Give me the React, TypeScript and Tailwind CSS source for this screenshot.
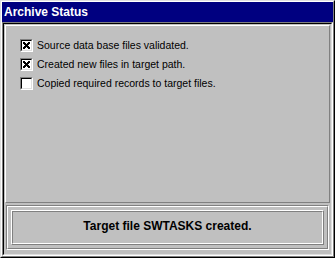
import React from "react";

function Check({ checked, label }: { checked: boolean; label: string }) {
  return (
    <div className="flex items-center h-[19px]">
      <div className="w-[13px] h-[13px] bg-white border border-t-[#808080] border-l-[#808080] border-r-white border-b-white">
        <div className="w-full h-full border border-t-black border-l-black border-r-[#dfdfdf] border-b-[#dfdfdf] flex items-center justify-center">
          {checked && (
            <svg width="9" height="9" viewBox="0 0 9 9" shapeRendering="crispEdges">
              <path d="M1 1h2v1h1v1h1v-1h1v-1h2v2h-1v1h-1v1h1v1h1v2h-2v-1h-1v-1h-1v1h-1v1h-2v-2h1v-1h1v-1h-1v-1h-1z" fill="#000" />
            </svg>
          )}
        </div>
      </div>
      <span className="ml-[4px] text-[10.5px] text-black leading-none">{label}</span>
    </div>
  );
}

export default function App() {
  return (
    <div
      className="w-[335px] h-[258px] bg-[#c0c0c0] border border-t-[#dfdfdf] border-l-[#dfdfdf] border-r-black border-b-black"
      style={{ fontFamily: '"Liberation Sans", Arial, sans-serif' }}
    >
      <div className="w-full h-full border border-t-white border-l-white border-r-[#808080] border-b-[#808080] flex flex-col">
        <div className="h-[20px] bg-[#000080] text-white font-bold text-[12px] pl-[2px] flex items-center">
          Archive Status
        </div>
        <div className="flex-1 border border-t-[#808080] border-l-[#808080] border-r-white border-b-white">
          <div className="w-full h-full border border-t-black border-l-black border-r-[#dfdfdf] border-b-[#dfdfdf] flex flex-col p-[1px]">
            <div className="flex-1 border border-t-white border-l-white border-r-[#808080] border-b-[#808080] pl-[14px] pt-[10px] flex flex-col">
              <Check checked label="Source data base files validated." />
              <Check checked label="Created new files in target path." />
              <Check checked={false} label="Copied required records to target files." />
            </div>
            <div className="h-[45px] mx-[1px] mt-[2px] mb-[3px] border border-t-[#808080] border-l-[#808080] border-r-white border-b-white">
              <div className="w-full h-full border border-t-white border-l-white border-r-[#808080] border-b-[#808080] p-[3px]">
                <div className="w-full h-full border border-t-white border-l-white border-r-[#808080] border-b-[#808080]">
                  <div className="w-full h-full border border-t-[#808080] border-l-[#808080] border-r-white border-b-white flex items-center justify-center pb-[3px] text-[12px] font-bold text-black">
                    Target file SWTASKS created.
                  </div>
                </div>
              </div>
            </div>
          </div>
        </div>
      </div>
    </div>
  );
}
